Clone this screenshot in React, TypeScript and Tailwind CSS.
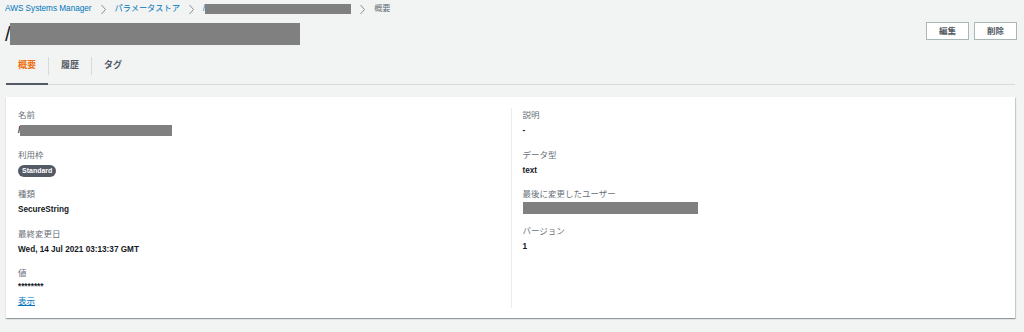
import React from "react";

const font = "font-['Liberation_Sans','Noto_Sans_CJK_JP',sans-serif]";

const Redact = ({ w, h }: { w: number; h: number }) => (
  <span className="inline-block bg-[#808080] align-middle" style={{ width: w, height: h }} />
);

const Chevron = () => (
  <svg width="7" height="11" viewBox="0 0 7 11" className="mx-[8px]">
    <path d="M1.5 1 L5.5 5.5 L1.5 10" fill="none" stroke="#879196" strokeWidth="1" />
  </svg>
);

const Field = ({ label, children, last }: { label: string; children: React.ReactNode; last?: boolean }) => (
  <div className={last ? "" : "mb-[9.5px]"}>
    <div className="text-[8.5px] leading-[15px] text-[#687078]">{label}</div>
    <div className="text-[8.2px] leading-[15px] font-bold text-[#16191f]">{children}</div>
  </div>
);

const App: React.FC = () => {
  const tabs = ["概要", "履歴", "タグ"];

  return (
    <div className={`w-full h-[332px] bg-[#f2f3f3] pl-[6px] pr-[9px] overflow-hidden ${font}`}>
      {/* パンくず */}
      <div className="flex items-center h-[10px] mt-[4px] -ml-px text-[8.2px] leading-[10px]">
        <span className="text-[#0073bb]">AWS Systems Manager</span>
        <Chevron />
        <span className="text-[#0073bb]">パラメータストア</span>
        <Chevron />
        <span className="text-[#0073bb] flex items-center">
          /<Redact w={146} h={10} />
        </span>
        <Chevron />
        <span className="text-[#687078]">概要</span>
      </div>

      {/* タイトル */}
      <div className="flex justify-between h-[28px] mt-[6px]">
        <div className="flex items-center -ml-px">
          <span className="text-[20px] leading-[22px] text-[#16191f]">/</span>
          <span className="inline-block bg-[#808080] w-[290px] h-[22px] -ml-[1px]" />
        </div>
        <div className="flex gap-[5px] pt-[2px] -mr-[2px]">
          <button className="w-[43px] h-[18px] bg-white border border-[#aab7b8] text-[8.5px] font-bold text-[#545b64]">
            編集
          </button>
          <button className="w-[43px] h-[18px] bg-white border border-[#aab7b8] text-[8.5px] font-bold text-[#545b64]">
            削除
          </button>
        </div>
      </div>

      {/* タブ */}
      <div className="flex items-center h-[37px] border-b border-[#d5dbdb]">
        {tabs.map((t, i) => (
          <React.Fragment key={t}>
            {i > 0 && <span className="w-px h-[18px] bg-[#d5dbdb]" />}
            <div
              className={`h-full flex items-center px-[12px] text-[9px] font-bold ${
                i === 0 ? "text-[#ec7211] border-b-2 border-[#545b64] -mb-px w-[42px]" : "text-[#545b64]"
              }`}
            >
              {t}
            </div>
          </React.Fragment>
        ))}
      </div>

      {/* 詳細カード */}
      <div className="mt-[12px] bg-white shadow-[0_1px_1px_0_rgba(0,28,36,0.3),1px_1px_1px_0_rgba(0,28,36,0.15)] grid grid-cols-2 pt-[11px] pb-[10px]">
        <div className="pl-[12px]">
          <Field label="名前">
            <span className="flex items-center">
              /<Redact w={152} h={11} />
            </span>
          </Field>
          <Field label="利用枠">
            <span className="inline-flex items-center h-[12px] px-[4px] rounded-full bg-[#545b64] text-white text-[7px] leading-[12px]">
              Standard
            </span>
          </Field>
          <Field label="種類">SecureString</Field>
          <Field label="最終変更日">Wed, 14 Jul 2021 03:13:37 GMT</Field>
          <div>
            <div className="text-[8.5px] leading-[14px] text-[#687078]">値</div>
            <div className="text-[8.2px] leading-[14px] font-bold text-[#16191f]">********</div>
            <div className="text-[8.5px] leading-[14px] text-[#0073bb] underline">表示</div>
          </div>
        </div>
        <div className="border-l border-[#eaeded] pl-[11px]">
          <Field label="説明">-</Field>
          <Field label="データ型">text</Field>
          <Field label="最後に変更したユーザー">
            <span className="flex items-center">
              <Redact w={175} h={12} />
            </span>
          </Field>
          <Field label="バージョン" last>
            1
          </Field>
        </div>
      </div>
    </div>
  );
};

export default App;
